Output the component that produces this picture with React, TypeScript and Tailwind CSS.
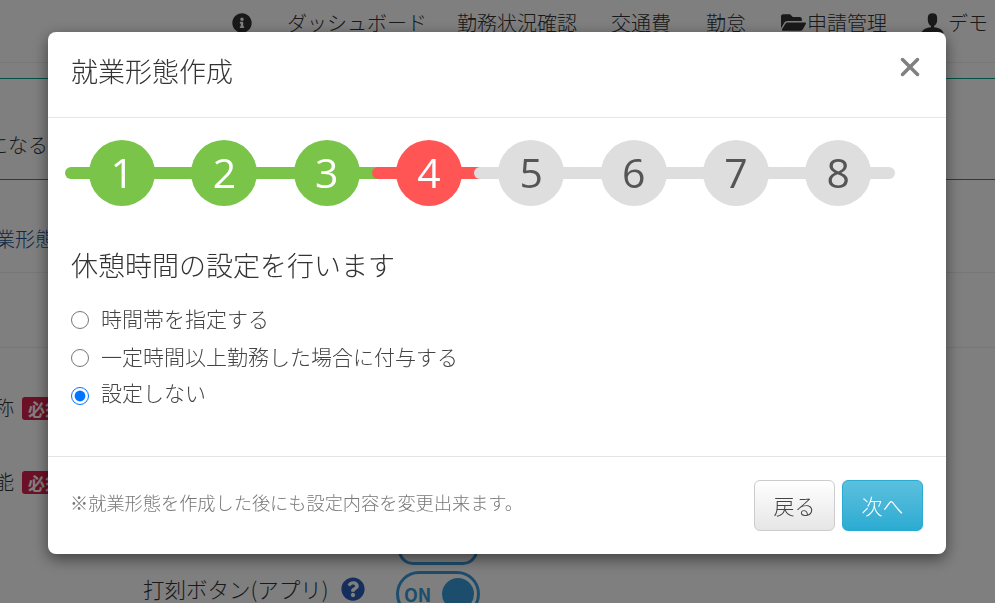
import { X } from "lucide-react";
import { FaFolderOpen, FaInfoCircle, FaQuestionCircle } from "react-icons/fa";
import { ImUser } from "react-icons/im";

const font = "font-['Noto_Sans_CJK_JP','Noto_Sans',sans-serif]";

const steps = [
  { n: 1, line: "bg-[#7ac44a]", circle: "bg-[#7ac44a] text-white" },
  { n: 2, line: "bg-[#7ac44a]", circle: "bg-[#7ac44a] text-white" },
  { n: 3, line: "bg-[#7ac44a]", circle: "bg-[#7ac44a] text-white" },
  { n: 4, line: "bg-[#ff5555]", circle: "bg-[#ff5555] text-white" },
  { n: 5, line: "bg-[#dedede]", circle: "bg-[#dedede] text-[#555555]" },
  { n: 6, line: "bg-[#dedede]", circle: "bg-[#dedede] text-[#555555]" },
  { n: 7, line: "bg-[#dedede]", circle: "bg-[#dedede] text-[#555555]" },
  { n: 8, line: "bg-[#dedede]", circle: "bg-[#dedede] text-[#555555]" },
];

const radios = [
  { label: "時間帯を指定する", checked: false, text: "mt-[-3px]" },
  { label: "一定時間以上勤務した場合に付与する", checked: false, text: "mt-[-3px]" },
  { label: "設定しない", checked: true, text: "mt-[-6px]" },
];

function RequiredBadge() {
  return (
    <span className="rounded-[3px] bg-[#d9234b] px-[6px] text-[17px] font-bold leading-[23px] text-white">必須</span>
  );
}

function Page() {
  return (
    <div className="h-[603px] overflow-hidden bg-white text-[#333333]">
      <nav className="flex h-[63px] items-start justify-end border-b border-[#eeeeee] pr-[7px] text-[20px] font-light">
        <div className="flex h-[45px] items-center">
          <FaInfoCircle className="mr-[35px] text-[20px] text-[#333333]" />
          <span className="mr-[30px]">ダッシュボード</span>
          <span className="mr-[34px]">勤務状況確認</span>
          <span className="mr-[35px]">交通費</span>
          <span className="mr-[35px]">勤怠</span>
          <FaFolderOpen className="mr-[1px] text-[25px] text-[#333333]" />
          <span className="mr-[33px]">申請管理</span>
          <ImUser className="mr-[3px] text-[25px] text-[#333333]" />
          <span className="w-[40px] whitespace-nowrap">デモ</span>
        </div>
      </nav>
      <div className="mt-[15px] h-[102px] border-y border-[#00a08a]">
        <p className="ml-[-32px] mt-[51px] text-[20px] font-light">気になる</p>
      </div>
      <p className="ml-[-25px] mt-[44px] text-[20px] font-light text-[#23528f]">就業形態</p>
      <div className="mt-[18px] h-[76px] border-y border-[#eeeeee]" />
      <div className="ml-[-26px] mt-[48px] flex h-[24px] items-center gap-[8px] text-[20px] font-light">
        <span>名称</span>
        <RequiredBadge />
      </div>
      <div className="ml-[-26px] mt-[50px] flex h-[24px] items-center gap-[8px] text-[20px] font-light">
        <span>機能</span>
        <RequiredBadge />
      </div>
      <div className="ml-[398px] mt-[41px] h-[30px] w-[80px] rounded-[16px] border-[3px] border-[#3a9bd9]" />
      <div className="ml-[143px] mt-[6px] flex items-start text-[20px] font-light">
        <span className="mt-[2px] w-[198px] whitespace-nowrap text-[21.5px]">打刻ボタン(アプリ)</span>
        <FaQuestionCircle className="mt-[6px] text-[24px] text-[#2a5cb8]" />
        <div className="ml-[31px] flex h-[46px] w-[84px] shrink-0 items-center justify-between rounded-[23px] border-[3px] border-[#3a9bd9] pl-[5px] pr-[3px]">
          <span className="text-[18px] font-bold text-[#3a9bd9]">ON</span>
          <span className="h-[32px] w-[32px] rounded-full bg-[#3a9bd9]" />
        </div>
      </div>
    </div>
  );
}

function Stepper() {
  return (
    <ul className="mt-[22px] flex px-[23px]">
      {steps.map((s) => (
        <li key={s.n} className="relative flex h-[66px] w-[102.3px] shrink-0 items-center justify-center">
          <span className={`absolute left-[-6px] right-[-6px] top-[27px] h-[12px] rounded-full ${s.line}`} />
          <span
            className={`relative flex h-[66px] w-[66px] items-center justify-center rounded-full text-[41px] font-['Open_Sans',sans-serif] ${s.circle}`}
          >
            {s.n}
          </span>
        </li>
      ))}
    </ul>
  );
}

function Modal() {
  return (
    <div className="fixed inset-0 bg-black/50 pl-[48px] pr-[49px] pt-[32px]">
      <div className="h-[522px] overflow-hidden rounded-[8px] bg-white shadow-[0_5px_15px_rgba(0,0,0,0.5)]">
        <div className="flex h-[86px] items-start justify-between border-b border-[#e5e5e5] pl-[23px] pr-[21px]">
          <h4 className="mt-[19px] text-[27px] font-light leading-[40px] text-[#333333]">就業形態作成</h4>
          <button className="mt-[20px] text-[#808080]">
            <X size={30} strokeWidth={2.8} />
          </button>
        </div>
        <Stepper />
        <div className="h-[212px] border-b border-[#e5e5e5] px-[23px]">
          <p className="mt-[39px] text-[27px] font-light leading-[40px] text-[#333333]">休憩時間の設定を行います</p>
          <div className="mt-[16px]">
            {radios.map((r) => (
              <label key={r.label} className="flex h-[38px] items-center gap-[12px] text-[21px] font-light text-[#444444]">
                <input type="radio" name="rest" defaultChecked={r.checked} className="h-[18px] w-[18px]" />
                <span className={r.text}>{r.label}</span>
              </label>
            ))}
          </div>
        </div>
        <div className="flex h-[97px] items-center justify-between pl-[22px] pr-[23px]">
          <p className="mt-[-6px] text-[18.2px] font-light text-[#777777]">※就業形態を作成した後にも設定内容を変更出来ます。</p>
          <div className="flex gap-[7px]">
            <button className="h-[51px] w-[81px] rounded-[6px] border border-[#cccccc] bg-gradient-to-b from-white to-[#e6e6e6] text-[21px] font-light text-[#444444]">
              戻る
            </button>
            <button className="h-[51px] w-[81px] rounded-[6px] border border-[#2aabd2] bg-gradient-to-b from-[#5bc0de] to-[#2aabd2] text-[21px] font-light text-white">
              次へ
            </button>
          </div>
        </div>
      </div>
    </div>
  );
}

export default function App() {
  return (
    <div className={font}>
      <Page />
      <Modal />
    </div>
  );
}
